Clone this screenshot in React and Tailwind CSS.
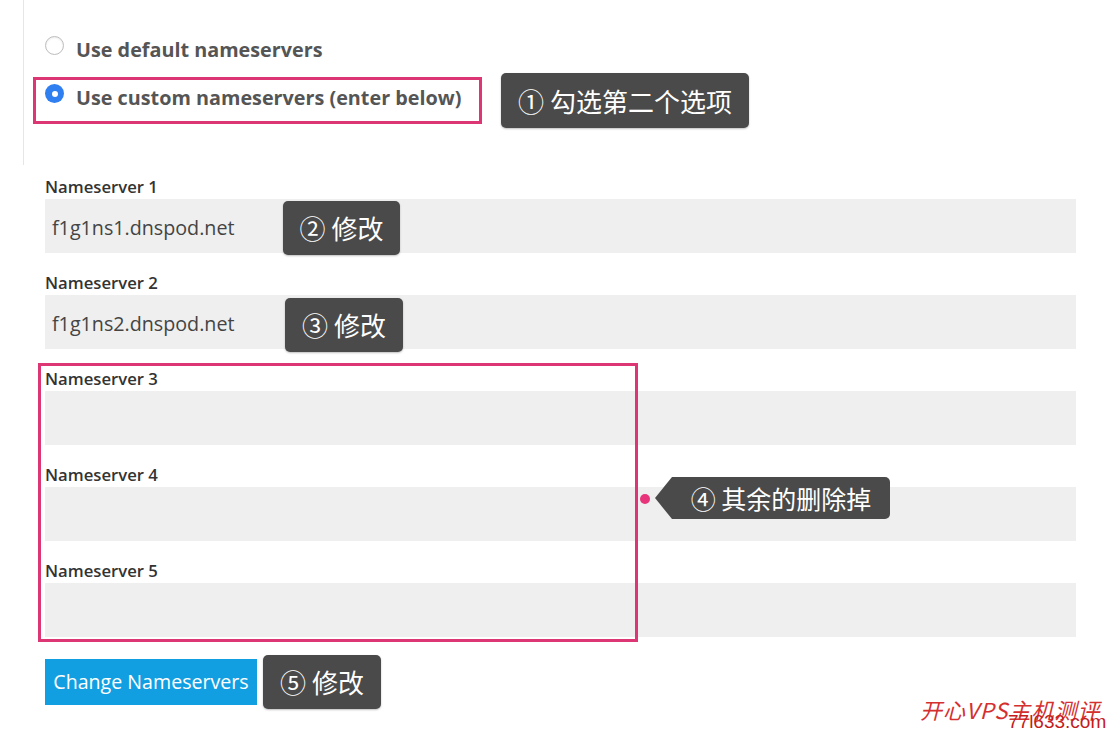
import React from "react";

const sans = { fontFamily: '"Open Sans", "Noto Sans CJK SC", sans-serif' };

function Tip({ children, className = "" }) {
  return (
    <div
      className={
        "flex items-center justify-center rounded-[5px] bg-[#4a4a4a] text-white text-[26px] leading-none [font-family:'Noto_Sans_CJK_SC',sans-serif] shadow-[0_1px_2px_rgba(0,0,0,0.25)] " +
        className
      }
    >
      {children}
    </div>
  );
}

function Field({ label, value, tip, tipClass }) {
  return (
    <div className="flex flex-col">
      <div className="h-[24px] text-[16.7px] leading-[24px] font-semibold text-[#333]">{label}</div>
      <div className="relative flex h-[54px] items-center bg-[#efefef] pl-[7px] text-[19.7px] text-[#444]">
        <span className="pt-[3px]">{value}</span>
        {tip && <Tip className={"absolute " + tipClass}>{tip}</Tip>}
      </div>
    </div>
  );
}

export default function App() {
  return (
    <div className="relative h-[741px] w-[1120px] overflow-hidden bg-white" style={sans}>
      {/* top section */}
      <div className="ml-[23px] h-[165px] border-l border-[#e6e6e6] pt-[36px]">
        <div className="flex items-start pl-[21px]">
          <span className="h-[19px] w-[19px] rounded-full border border-[#bdbdbd] bg-white shadow-[inset_0_1px_2px_rgba(0,0,0,0.08)]" />
          <span className="ml-[12px] h-[28px] text-[19.8px] leading-[28px] font-bold text-[#555]">
            Use default nameservers
          </span>
        </div>
        <div className="mt-[9px] flex items-center gap-[19px] pl-[9px]">
          <div className="flex h-[47px] w-[449px] items-start border-[3px] border-[#dc3674] pl-[9px] pt-[4px]">
            <span className="flex h-[19px] w-[19px] items-center justify-center rounded-full bg-[#2f7ff0]">
              <span className="h-[6px] w-[6px] rounded-full bg-white" />
            </span>
            <span className="ml-[12px] h-[28px] text-[19.8px] leading-[28px] font-bold text-[#555]">
              Use custom nameservers (enter below)
            </span>
          </div>
          <Tip className="h-[55px] w-[248px]">① 勾选第二个选项</Tip>
        </div>
      </div>

      {/* fields */}
      <div className="mr-[44px] ml-[45px] flex flex-col gap-[18px] pt-[10px]">
        <Field
          label="Nameserver 1"
          value="f1g1ns1.dnspod.net"
          tip="② 修改"
          tipClass="left-[238px] top-[2px] h-[54px] w-[117px]"
        />
        <Field
          label="Nameserver 2"
          value="f1g1ns2.dnspod.net"
          tip="③ 修改"
          tipClass="left-[240px] top-[3px] h-[54px] w-[118px]"
        />
        <div className="relative flex flex-col gap-[18px]">
          <Field label="Nameserver 3" value="" />
          <Field label="Nameserver 4" value="" />
          <Field label="Nameserver 5" value="" />
          <div className="absolute left-[-7px] top-[-4px] h-[279px] w-[600px] border-[3px] border-[#dc3674]" />
          <span className="absolute left-[595px] top-[127px] h-[10px] w-[10px] rounded-full bg-[#e8347a]" />
          <div className="absolute left-[610px] top-[110px] flex items-center">
            <span className="h-0 w-0 border-y-[21px] border-r-[17px] border-y-transparent border-r-[#4a4a4a]" />
            <div className="flex h-[42px] w-[218px] items-center justify-center rounded-r-[5px] bg-[#4a4a4a] text-[25px] leading-none text-white [font-family:'Noto_Sans_CJK_SC',sans-serif]">
              ④ 其余的删除掉
            </div>
          </div>
        </div>
        <div className="flex items-center gap-[6px]">
          <button className="h-[46px] w-[212px] bg-[#129fe2] text-[19.6px] text-white">Change Nameservers</button>
          <Tip className="h-[54px] w-[118px]">⑤ 修改</Tip>
        </div>
      </div>

      {/* watermark */}
      <div className="absolute left-[920px] top-[698px] whitespace-nowrap text-[22px] italic leading-none tracking-[1px] text-[#d43030] [font-family:'Noto_Sans_CJK_SC',sans-serif]">
        开心VPS主机测评
      </div>
      <div className="absolute left-[1008px] top-[712px] whitespace-nowrap text-[19px] leading-none text-[#c41c1c] [font-family:'Liberation_Sans',sans-serif]">
        77l633.com
      </div>
    </div>
  );
}
